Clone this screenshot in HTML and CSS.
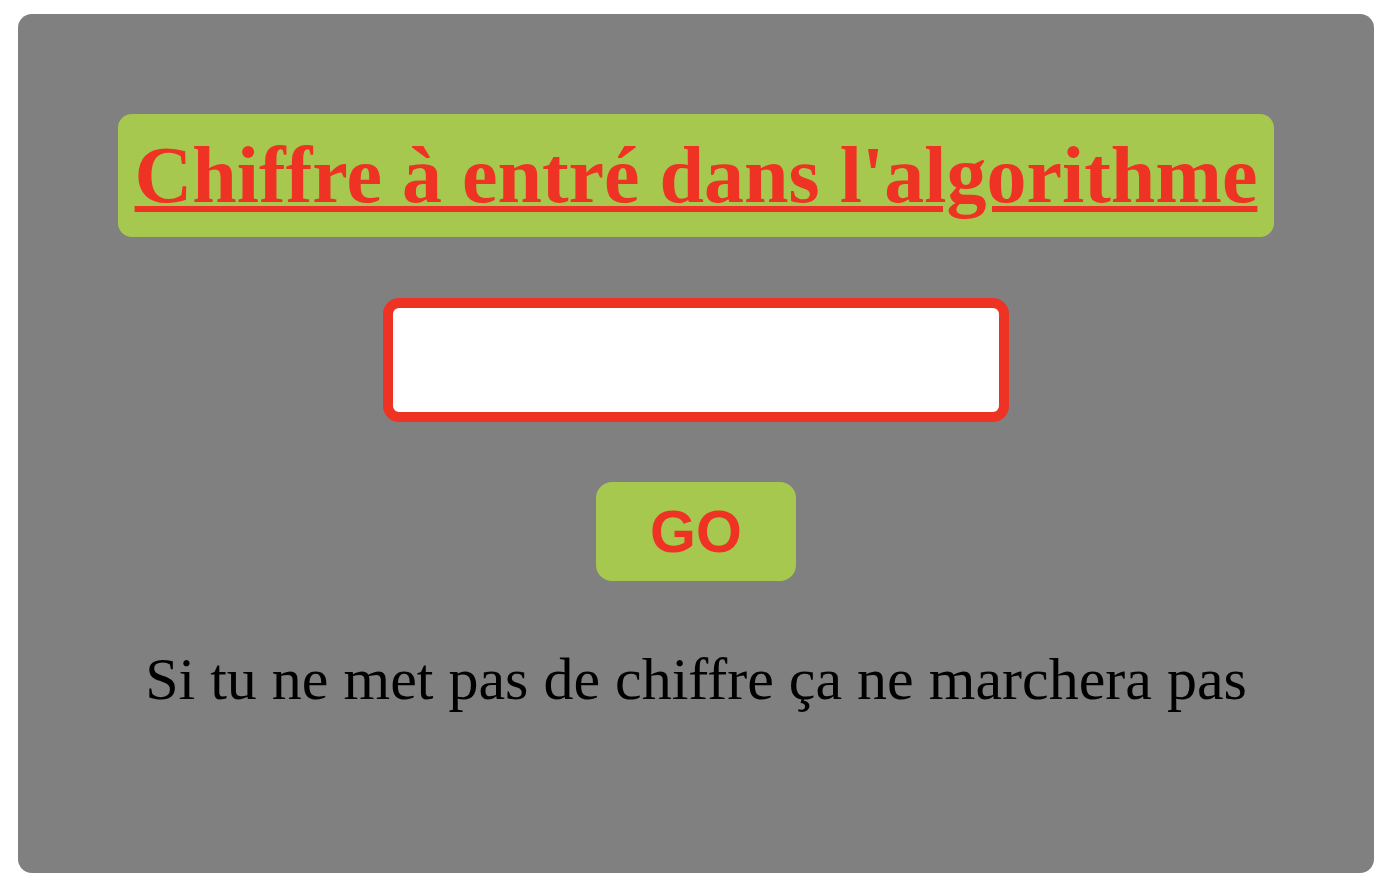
FILE: index.html
```html
<!DOCTYPE html>
<html lang="fr">
<head>
<meta charset="utf-8">
<title>Algorithme</title>
<link rel="stylesheet" href="styles.css">
</head>
<body>
<main class="panel">
  <h1 class="title">Chiffre à entré dans l'algorithme</h1>
  <input class="field" type="text">
  <button class="go" type="button">GO</button>
  <p class="hint">Si tu ne met pas de chiffre ça ne marchera pas</p>
</main>
</body>
</html>
```

FILE: styles.css
```css
html, body {
  margin: 0;
  padding: 0;
  background: #ffffff;
}

body {
  padding: 14px 18px 15px;
}

.panel {
  box-sizing: border-box;
  height: 859px;
  background: #808080;
  border-radius: 14px;
  display: flex;
  flex-direction: column;
  align-items: center;
  padding-top: 100px;
}

.title {
  margin: 0;
  padding: 16px 17px;
  background: #a6c84e;
  border-radius: 14px;
  color: #ee3224;
  font-family: "Liberation Serif", "Times New Roman", serif;
  font-weight: bold;
  font-size: 80px;
  line-height: normal;
  text-decoration: underline;
  text-decoration-thickness: 6px;
  text-underline-offset: 4px;
  white-space: nowrap;
}

.field {
  box-sizing: border-box;
  margin-top: 61px;
  width: 626px;
  height: 124px;
  border: 10px solid #ee3224;
  border-radius: 16px;
  background: #ffffff;
  outline: none;
  padding: 0 10px;
  font-size: 40px;
}

.go {
  box-sizing: border-box;
  margin-top: 60px;
  width: 200px;
  height: 99px;
  border: none;
  border-radius: 16px;
  background: #a6c84e;
  color: #ee3224;
  font-family: "Liberation Sans", Arial, sans-serif;
  font-weight: bold;
  font-size: 59px;
  padding: 0;
}

.hint {
  margin: 64px 0 0;
  color: #000000;
  font-family: "Liberation Serif", "Times New Roman", serif;
  font-size: 60px;
  line-height: normal;
}
```
